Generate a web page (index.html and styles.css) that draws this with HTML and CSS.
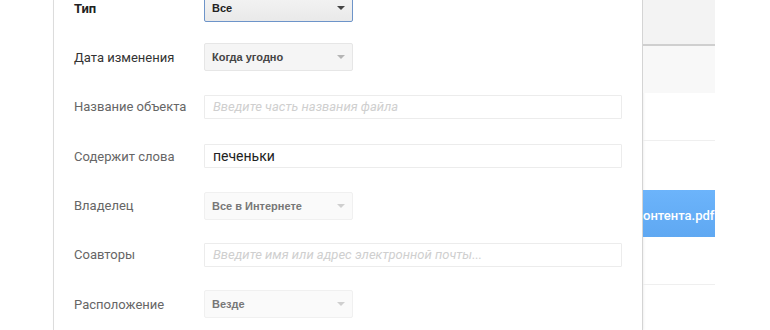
FILE: index.html
```html
<!DOCTYPE html>
<html lang="ru">
<head>
  <meta charset="UTF-8">
  <title>Расширенный поиск</title>
  <link rel="stylesheet" href="styles.css">
</head>
<body>
  <div class="page">
    <div class="gutter"></div>

    <div class="dialog">
      <div class="form">
        <div class="label strong">Тип</div>
        <div class="select active"><span>Все</span><i class="arrow"></i></div>

        <div class="label dark">Дата изменения</div>
        <div class="select"><span>Когда угодно</span><i class="arrow"></i></div>

        <div class="label">Название объекта</div>
        <div class="field placeholder">Введите часть названия файла</div>

        <div class="label">Содержит слова</div>
        <div class="field filled">печеньки</div>

        <div class="label">Владелец</div>
        <div class="select muted"><span>Все в Интернете</span><i class="arrow"></i></div>

        <div class="label">Соавторы</div>
        <div class="field placeholder">Введите имя или адрес электронной почты...</div>

        <div class="label">Расположение</div>
        <div class="select muted"><span>Везде</span><i class="arrow"></i></div>
      </div>
    </div>

    <div class="side">
      <div class="side-head"></div>
      <div class="side-band"></div>
      <div class="side-row"></div>
      <div class="side-file">онтента.pdf</div>
      <div class="side-row"></div>
    </div>
  </div>
</body>
</html>
```

FILE: styles.css
```css
body {
  margin: 0;
  background: #fff;
  font-family: Roboto, "Liberation Sans", sans-serif;
  overflow: hidden;
}
.page {
  display: flex;
  height: 330px;
}
.gutter {
  width: 53px;
  flex-shrink: 0;
}
.dialog {
  width: 588px;
  flex-shrink: 0;
  border-left: 1px solid #dcdcdc;
  border-right: 1px solid #d4d4d4;
  box-shadow: 1px 0 2px rgba(0, 0, 0, 0.06);
  overflow: hidden;
}
.form {
  display: grid;
  grid-template-columns: 130px 418px;
  grid-auto-rows: 49.4px;
  align-items: center;
  margin-top: -16.7px;
  padding-left: 20px;
}
.label {
  font-size: 13px;
  color: #666;
}
.label.dark {
  color: #333;
}
.label.strong {
  color: #222;
  font-weight: bold;
}

/* выпадающие списки */
.select {
  width: 147px;
  height: 26px;
  box-sizing: content-box;
  border: 1px solid #e6e6e6;
  border-radius: 2px;
  background: #f5f5f5;
  display: flex;
  align-items: center;
  justify-content: space-between;
  padding: 0 0 0 7px;
  width: 140px;
  font-family: "Liberation Sans", Arial, sans-serif;
  font-size: 11px;
  font-weight: bold;
  color: #444;
}
.select.active {
  border-color: #6d94c9;
  background: linear-gradient(#f4f4f4, #e9e9e9);
  color: #222;
}
.select.muted {
  background: #fafafa;
  border-color: #f0f0f0;
  color: #777;
}
.arrow {
  width: 0;
  height: 0;
  margin-right: 7px;
  border-left: 4px solid transparent;
  border-right: 4px solid transparent;
  border-top: 4px solid #b5b5b5;
}
.select.active .arrow {
  border-top-color: #444;
}
.select.muted .arrow {
  border-top-color: #cfcfcf;
}

/* текстовые поля */
.field {
  height: 22px;
  line-height: 22px;
  border: 1px solid #ececec;
  border-radius: 1px;
  padding: 0 8px;
  font-size: 13px;
  white-space: nowrap;
  overflow: hidden;
}
.field.placeholder {
  color: #cfcfcf;
  font-style: italic;
}
.field.filled {
  color: #222;
  font-size: 14px;
}

/* правая колонка со списком файлов */
.side {
  width: 72px;
  flex-shrink: 0;
  display: flex;
  flex-direction: column;
}
.side-head {
  height: 44px;
  background: #f3f3f3;
  border-bottom: 2px solid #cfcfcf;
}
.side-band {
  height: 47px;
  background: #f8f8f8;
}
.side-row {
  height: 47px;
  border-bottom: 1px solid #efefef;
}
.side-file {
  margin-top: 49px;
  height: 47px;
  background: linear-gradient(#6cb4fb, #5fa8f2);
  color: #fff;
  font-size: 13px;
  font-weight: 500;
  line-height: 51px;
  white-space: nowrap;
  overflow: hidden;
}
```
